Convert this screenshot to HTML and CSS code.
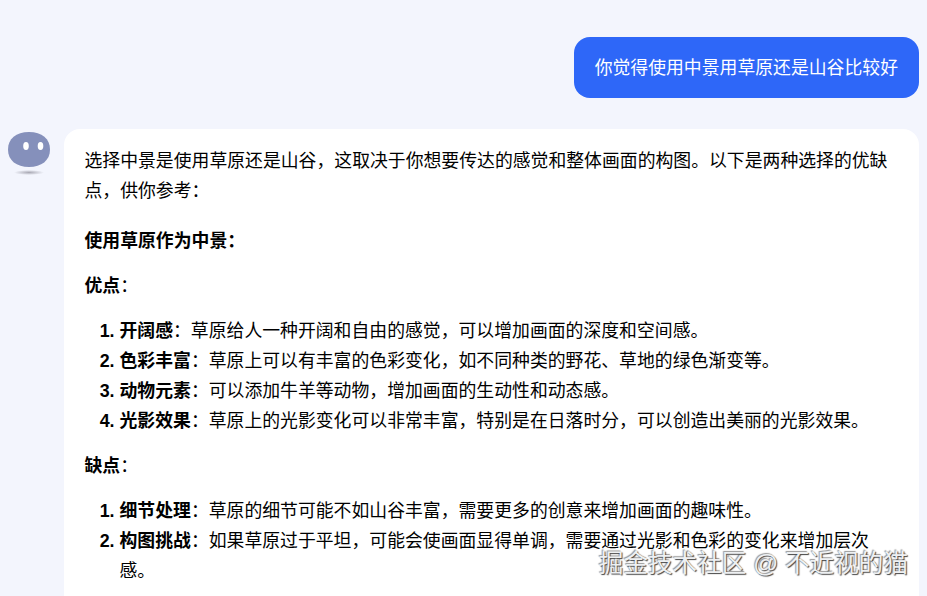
FILE: index.html
```html
<!DOCTYPE html>
<html lang="zh-CN">
<head>
  <meta charset="UTF-8">
  <title>对话</title>
  <link rel="stylesheet" href="styles.css">
</head>
<body>
  <main class="chat">
    <div class="msg-user">
      <div class="bubble">你觉得使用中景用草原还是山谷比较好</div>
    </div>
    <div class="msg-bot">
      <div class="avatar">
        <svg width="42" height="46" viewBox="0 0 42 46">
          <defs>
            <radialGradient id="shade">
              <stop offset="0" stop-color="#a9a9b4"/>
              <stop offset="1" stop-color="#f3f5fd"/>
            </radialGradient>
          </defs>
          <ellipse cx="21" cy="40.500" rx="15" ry="2.500" fill="url(#shade)"/>
          <path d="M21 0c13 0 21 6.500 21 17.500 0 11-8.500 17.500-21 17.500s-21-6.500-21-17.500c0-11 8-17.500 21-17.500z" fill="#8590bb"/>
          <ellipse cx="18" cy="14" rx="2.800" ry="4" fill="#fff"/>
          <ellipse cx="32.500" cy="14" rx="2.800" ry="4" fill="#fff"/>
        </svg>
      </div>
      <div class="card">
        <p class="intro">选择中景是使用草原还是山谷，这取决于你想要传达的感觉和整体画面的构图。以下是两种选择的优缺点，供你参考：</p>
        <p><strong>使用草原作为中景：</strong></p>
        <p><strong>优点</strong>：</p>
        <ol>
          <li><strong>开阔感</strong>：草原给人一种开阔和自由的感觉，可以增加画面的深度和空间感。</li>
          <li><strong>色彩丰富</strong>：草原上可以有丰富的色彩变化，如不同种类的野花、草地的绿色渐变等。</li>
          <li><strong>动物元素</strong>：可以添加牛羊等动物，增加画面的生动性和动态感。</li>
          <li><strong>光影效果</strong>：草原上的光影变化可以非常丰富，特别是在日落时分，可以创造出美丽的光影效果。</li>
        </ol>
        <p><strong>缺点</strong>：</p>
        <ol>
          <li><strong>细节处理</strong>：草原的细节可能不如山谷丰富，需要更多的创意来增加画面的趣味性。</li>
          <li><strong>构图挑战</strong>：如果草原过于平坦，可能会使画面显得单调，需要通过光影和色彩的变化来增加层次感。</li>
        </ol>
      </div>
    </div>
  </main>
  <div class="watermark">掘金技术社区 @ 不近视的猫</div>
</body>
</html>
```

FILE: styles.css
```css
html, body {
  height: 100%;
}
body {
  margin: 0;
  background-color: #f3f5fd;
  font-family: "Liberation Sans", "Noto Sans CJK SC", sans-serif;
  font-size: 17.85px;
  line-height: 30px;
  color: #000;
  overflow: hidden;
}
.chat {
  padding: 37px 8px 0 8px;
}
.msg-user {
  display: flex;
  justify-content: flex-end;
  margin-bottom: 31px;
}
.bubble {
  background-color: #2e67f8;
  color: #fff;
  padding: 16px 21px 15px 21px;
  border-radius: 16px;
}
.msg-bot {
  display: flex;
  gap: 15px;
  align-items: flex-start;
}
.avatar {
  width: 42px;
  flex: none;
  padding-top: 3px;
  line-height: 0;
}
.card {
  flex: 1;
  background-color: #fff;
  border-radius: 16px;
  margin-left: -1px;
  padding: 17px 31px 20px 20.5px;
}
.card p {
  margin: 0 0 15px 0;
}
.card .intro {
  margin-bottom: 20px;
}
.card strong {
  font-weight: 700;
}
.card ol {
  margin: 0 0 15px 0;
  padding-left: 35px;
}
.card li::marker {
  font-weight: 700;
}
.watermark {
  position: absolute;
  right: 19px;
  top: 549px;
  font-size: 24.6px;
  line-height: 30px;
  color: #eef0f2;
  text-shadow: 1px 1px 1px #444, -1px -1px 1px #999;
  white-space: nowrap;
}
```
